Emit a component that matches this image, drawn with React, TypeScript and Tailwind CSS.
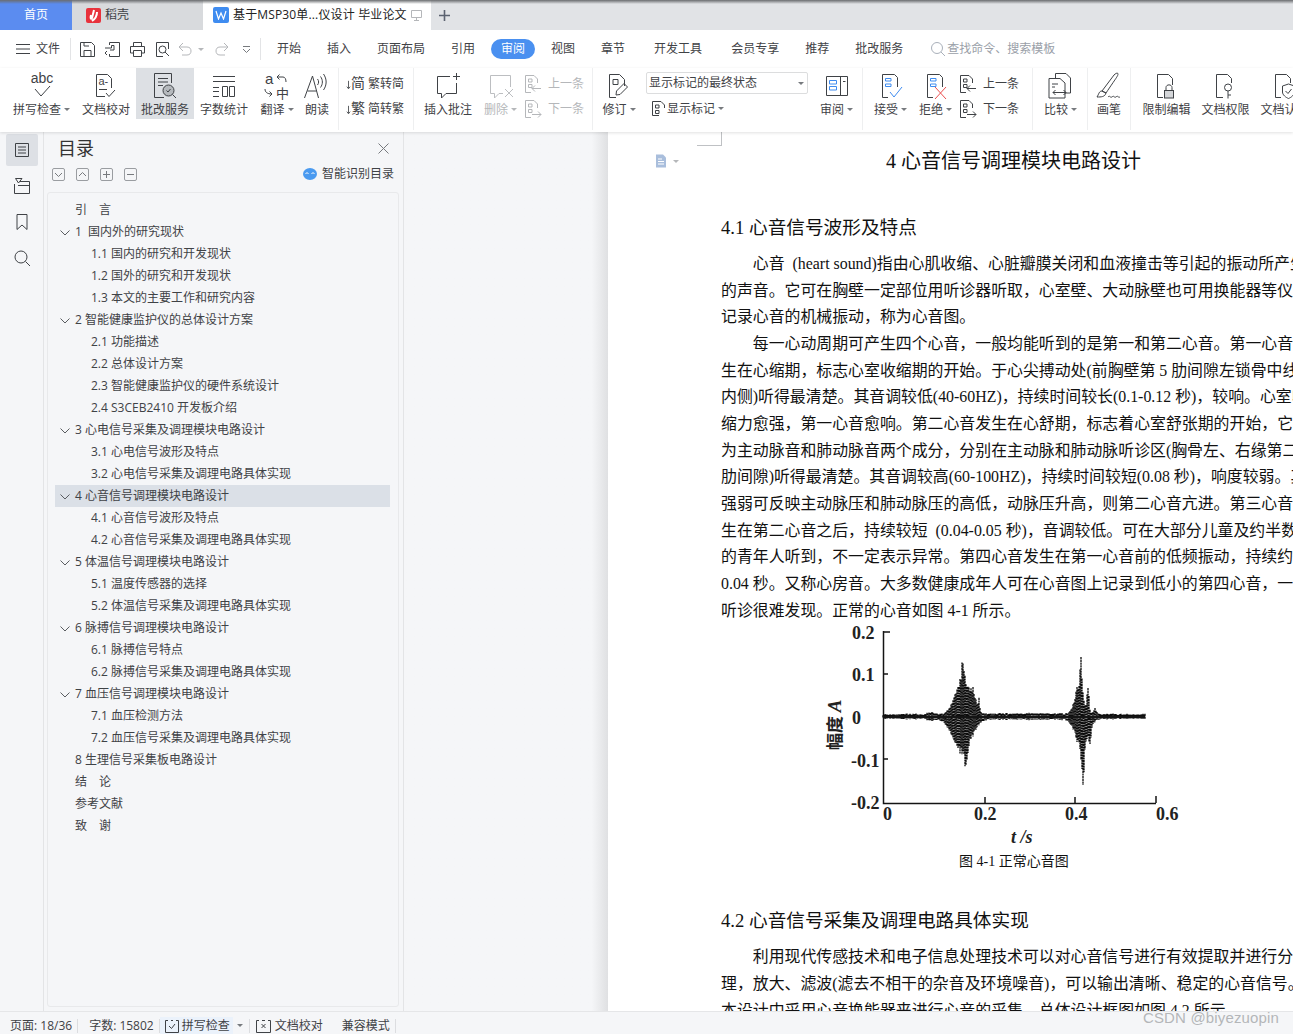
import type { ReactNode } from "react";

const ui = "font-['Open_Sans','Noto_Sans_CJK_SC',sans-serif]";

const Caret = ({ grey = false }: { grey?: boolean }) => (
  <span
    className={`ml-[3px] inline-block h-0 w-0 border-x-[3px] border-t-[3px] border-x-transparent ${
      grey ? "border-t-[#b5b7ba]" : "border-t-[#777a7e]"
    }`}
  />
);

const Ico = ({ s = 24, w, children, c = "#3f4246" }: { s?: number; w?: number; children: ReactNode; c?: string }) => (
  <svg width={w ?? s} height={s} viewBox={`0 0 ${w ?? s} ${s}`} fill="none" stroke={c} strokeWidth="1">
    {children}
  </svg>
);

const icons: Record<string, ReactNode> = {
  spell: (
    <Ico s={28} w={30}>
      <text x="15" y="11" textAnchor="middle" fontSize="14" fill="#3f4246" stroke="none" fontFamily="Liberation Sans">abc</text>
      <path d="M8 17L14 24L23 14" />
    </Ico>
  ),
  proof: (
    <Ico s={28}>
      <path d="M13 24.5H4.5V2.5H15.5L19.5 6.5V16" />
      <text x="6.5" y="13" fontSize="11" fill="#3f4246" stroke="none" fontFamily="Liberation Sans">a-</text>
      <path d="M7 17.5H15M14 21L17 24.5L23 18" />
    </Ico>
  ),
  service: (
    <Ico s={28}>
      <path d="M13 25.5H3.5V1.5H20.5V11" />
      <path d="M7 6.5H17M7 10H17M7 13.5H12" />
      <circle cx="17.5" cy="18.5" r="5.5" fill="#8d9196" fillOpacity="0.5" />
      <path d="M15.5 18.5L17 20L19.5 17M21.5 22.5L25 26" />
    </Ico>
  ),
  count: (
    <Ico s={28} w={26}>
      <path d="M2 4.5H24M2 9.5H24M2 15.5H8M2 19.5H8M2 24.5H8" />
      <path d="M11.5 14.5H16.5V24.5H11.5ZM18.5 14.5H23.5V24.5H18.5Z" />
    </Ico>
  ),
  trans: (
    <Ico s={28} w={30}>
      <text x="3" y="12" fontSize="15" fill="#3f4246" stroke="none" fontFamily="Liberation Sans">a</text>
      <text x="14" y="26" fontSize="13" fill="#3f4246" stroke="none" fontFamily="Noto Sans CJK SC">中</text>
      <path d="M15 5H21C23 5 24 7 24 10M15 5L17.5 2.5M15 5L17.5 7.5M3 17C3 20 5 22 10 22M10 22L7.5 19.5M10 22L7.5 24.5" />
    </Ico>
  ),
  read: (
    <Ico s={28}>
      <path d="M1.5 26L9.5 4L15.5 26M4.5 19H13.5" />
      <path d="M14.5 7C16 9 16 11 14.5 13M17.5 4.5C20 8 20 12 17.5 15.5M20.5 2C24 7 24 13 20.5 18" />
    </Ico>
  ),
  comment: (
    <Ico s={28} w={30}>
      <path d="M17 4.5H4.5V21.5H8.5V26L13 21.5H23.5V11" />
      <path d="M23.5 1V8M20 4.5H27" />
    </Ico>
  ),
  del: (
    <Ico s={28} w={30} c="#bcbec1">
      <path d="M4.5 3.5H24.5V15M4.5 3.5V21.5H8.5V26L13 21.5H17" />
      <path d="M19 17L27 25M27 17L19 25" />
    </Ico>
  ),
  track: (
    <Ico s={28}>
      <path d="M11 25.5H4.5V2.5H14.5L19.5 7.5V14" />
      <path d="M8 7.5H13V12.5H8Z" />
      <path d="M11 23L11.5 19L19 11.5L22.5 15L15 22.5Z" />
    </Ico>
  ),
  panel: (
    <Ico s={24}>
      <path d="M1.5 2.5H22.5V21.5H1.5ZM15.5 2.5V21.5M18 7.5H20.5" />
      <path d="M4.5 6.5H11.5V10H4.5ZM4.5 12.5H11.5V16H4.5Z" stroke="#3f8cf0" />
    </Ico>
  ),
  accept: (
    <Ico s={28}>
      <path d="M11 25.5H5.5V2.5H17.5L20.5 5.5V15" />
      <path d="M8.5 6.5H14V9H8.5ZM8.5 12H14V14.5H8.5Z" stroke="#3f8cf0" />
      <path d="M13 20L17 25L25 15" stroke="#3f8cf0" />
    </Ico>
  ),
  reject: (
    <Ico s={28}>
      <path d="M11 25.5H5.5V2.5H17.5L20.5 5.5V15" />
      <path d="M8.5 6.5H14V9H8.5ZM8.5 12H14V14.5H8.5Z" stroke="#3f8cf0" />
      <path d="M13 15L24 27M24 15L13 27" stroke="#ec4f4f" />
    </Ico>
  ),
  compare: (
    <Ico s={28}>
      <path d="M8.5 6.5V1.5H19L23.5 6V21H18" />
      <path d="M2 6.5H13L18 11V26H2Z" />
      <path d="M5 12H11M5 15H8M6 20.5H19M6 20.5L8.5 18M6 20.5L8.5 23M19 20.5L16.5 18M19 20.5L16.5 23" />
    </Ico>
  ),
  brush: (
    <Ico s={28} w={30}>
      <path d="M8 19L20 3C22 1 24 0.5 24 2C24 4 22 6 12 21Z" />
      <path d="M8 19C5 19 5 22 3 25C7 25 11 25 12 21Z" />
      <path d="M14 25C16 23 16 26 18 25C20 23 20 26 22 25C24 23 24 26 26 25" />
    </Ico>
  ),
  lock: (
    <Ico s={28}>
      <path d="M10 25.5H4.5V2.5H15.5L19.5 6.5V13" />
      <rect x="11.5" y="18.5" width="9" height="7.5" fill="#d4d6d9" />
      <path d="M13 18.5V15.5C13 12 19 12 19 15.5V18.5" />
    </Ico>
  ),
  key: (
    <Ico s={28}>
      <path d="M11 25.5H4.5V2.5H15.5L19.5 6.5V11" />
      <circle cx="16" cy="15.5" r="3.5" />
      <path d="M16 19V26.5M16 23H19" />
    </Ico>
  ),
  shield: (
    <Ico s={28}>
      <path d="M10 25.5H4.5V2.5H15.5L19.5 6.5V11" />
      <path d="M11.5 14L17.5 12L23.5 14V20C23.5 23 20 25.5 17.5 26.5C15 25.5 11.5 23 11.5 20Z" />
      <path d="M14.5 19L17 21.5L20.5 17" />
    </Ico>
  ),
};

const smallDoc = (arrow: "l" | "r", c = "#3f4246") => (
  <Ico s={20} w={22} c={c}>
    <path d="M8 18.5H2.5V1.5H11L14.5 5V9" />
    <path d="M5.5 5H9V8H5.5ZM5.5 10.5H9V13.5H5.5Z" />
    {arrow === "l" ? <path d="M9 14.5H18M9 14.5L12 11.5M9 14.5L12 17.5" /> : <path d="M9 15.5H18M18 15.5L15 12.5M18 15.5L15 18.5" />}
  </Ico>
);

const convert = (glyph: string) => (
  <span className="flex h-[20px] w-[19px] items-center justify-end text-[14px]">
    <svg width="6" height="12" viewBox="0 0 6 12" fill="none" stroke="#3f4246" className="mt-[3px]">
      <path d="M3 1V10M1 8L3 10.5L5 8" />
    </svg>
    {glyph}
  </span>
);

const RibbonBtn = ({
  className,
  icon,
  label,
  caret,
  grey,
  active,
}: {
  className: string;
  icon: string;
  label: string;
  caret?: boolean;
  grey?: boolean;
  active?: boolean;
}) => (
  <div className={`${className} flex shrink-0 flex-col items-center`}>
    <div className={`flex h-[51px] w-full flex-col items-center pt-[3px] ${active ? "bg-[#dde0e4]" : ""}`}>
      <div className="flex h-[29px] items-center justify-center">{icons[icon]}</div>
      <div className={`flex h-[19px] items-center whitespace-nowrap text-xs ${grey ? "text-[#b5b7ba]" : "text-[#3f4246]"}`}>
        {label}
        {caret && <Caret grey={grey} />}
      </div>
    </div>
  </div>
);

const Sep = ({ className = "" }: { className?: string }) => <div className={`${className} h-[62px] w-px shrink-0 bg-[#eeeff0]`} />;

const SmallRow = ({ icon, label, grey }: { icon: ReactNode; label: string; grey?: boolean }) => (
  <div className={`flex h-[25px] items-center whitespace-nowrap text-xs ${grey ? "text-[#b5b7ba]" : "text-[#3f4246]"}`}>
    {icon}
    <span className="ml-[3px]">{label}</span>
  </div>
);

const tabs: [string, string][] = [
  ["开始", "ml-[16px]"],
  ["插入", "ml-[26px]"],
  ["页面布局", "ml-[26px]"],
  ["引用", "ml-[26px]"],
];

const toc: { t: string; l: 0 | 1 | 2; active?: boolean }[] = [
  { t: "引　言", l: 0 },
  { t: "1  国内外的研究现状", l: 1 },
  { t: "1.1 国内的研究和开发现状", l: 2 },
  { t: "1.2 国外的研究和开发现状", l: 2 },
  { t: "1.3 本文的主要工作和研究内容", l: 2 },
  { t: "2 智能健康监护仪的总体设计方案", l: 1 },
  { t: "2.1 功能描述", l: 2 },
  { t: "2.2 总体设计方案", l: 2 },
  { t: "2.3 智能健康监护仪的硬件系统设计", l: 2 },
  { t: "2.4 S3CEB2410 开发板介绍", l: 2 },
  { t: "3 心电信号采集及调理模块电路设计", l: 1 },
  { t: "3.1 心电信号波形及特点", l: 2 },
  { t: "3.2 心电信号采集及调理电路具体实现", l: 2 },
  { t: "4 心音信号调理模块电路设计", l: 1, active: true },
  { t: "4.1 心音信号波形及特点", l: 2 },
  { t: "4.2 心音信号采集及调理电路具体实现", l: 2 },
  { t: "5 体温信号调理模块电路设计", l: 1 },
  { t: "5.1 温度传感器的选择", l: 2 },
  { t: "5.2 体温信号采集及调理电路具体实现", l: 2 },
  { t: "6 脉搏信号调理模块电路设计", l: 1 },
  { t: "6.1 脉搏信号特点", l: 2 },
  { t: "6.2 脉搏信号采集及调理电路具体实现", l: 2 },
  { t: "7 血压信号调理模块电路设计", l: 1 },
  { t: "7.1 血压检测方法", l: 2 },
  { t: "7.2 血压信号采集及调理电路具体实现", l: 2 },
  { t: "8 生理信号采集板电路设计", l: 0 },
  { t: "结　论", l: 0 },
  { t: "参考文献", l: 0 },
  { t: "致　谢", l: 0 },
];

const para1 = [
  "　　心音  (heart sound)指由心肌收缩、心脏瓣膜关闭和血液撞击等引起的振动所产生",
  "的声音。它可在胸壁一定部位用听诊器听取，心室壁、大动脉壁也可用换能器等仪器",
  "记录心音的机械振动，称为心音图。",
  "　　每一心动周期可产生四个心音，一般均能听到的是第一和第二心音。第一心音发",
  "生在心缩期，标志心室收缩期的开始。于心尖搏动处(前胸壁第 5 肋间隙左锁骨中线",
  "内侧)听得最清楚。其音调较低(40-60HZ)，持续时间较长(0.1-0.12 秒)，较响。心室收",
  "缩力愈强，第一心音愈响。第二心音发生在心舒期，标志着心室舒张期的开始，它分",
  "为主动脉音和肺动脉音两个成分，分别在主动脉和肺动脉听诊区(胸骨左、右缘第二",
  "肋间隙)听得最清楚。其音调较高(60-100HZ)，持续时间较短(0.08 秒)，响度较弱。其",
  "强弱可反映主动脉压和肺动脉压的高低，动脉压升高，则第二心音亢进。第三心音发",
  "生在第二心音之后，持续较短  (0.04-0.05 秒)，音调较低。可在大部分儿童及约半数",
  "的青年人听到，不一定表示异常。第四心音发生在第一心音前的低频振动，持续约",
  "0.04 秒。又称心房音。大多数健康成年人可在心音图上记录到低小的第四心音，一般",
  "听诊很难发现。正常的心音如图 4-1 所示。",
];

const para2 = [
  "　　利用现代传感技术和电子信息处理技术可以对心音信号进行有效提取并进行分析处",
  "理，放大、滤波(滤去不相干的杂音及环境噪音)，可以输出清晰、稳定的心音信号。",
  "本设计中采用心音换能器来进行心音的采集，总体设计框图如图 4.2 所示。",
];

// fake heart sound trace, seeded so the picture stays the same
const wave = (() => {
  let d = "";
  let seed = 11;
  const rnd = () => {
    seed = (seed * 16807) % 2147483647;
    return seed / 2147483647;
  };
  const g = (x: number, c: number, w: number, a: number) => a * Math.exp(-((x - c) * (x - c)) / (2 * w * w));
  for (let x = 883; x <= 1145; x += 1) {
    const bump = 1.5 + rnd() * 1.5 + g(x, 931, 3, 2) + g(x, 1035, 40, 1);
    const up =
      bump + g(x, 963, 1.2, 24) + g(x, 962, 7, 36) + g(x, 973, 3, 16) + g(x, 979, 0.8, 12) + g(x, 1081, 1, 30) + g(x, 1079, 4, 30) + g(x, 1088, 1, 30) + g(x, 1095, 1.5, 6);
    const dn =
      bump + g(x, 966, 1.5, 18) + g(x, 962, 9, 36) + g(x, 1083, 1.2, 36) + g(x, 1082, 6, 32) + g(x, 1090, 1, 14);
    const k = 0.8 + rnd() * 0.2;
    d += `M${x} ${(715.5 - up * k).toFixed(1)}V${(715.5 + dn * k).toFixed(1)}`;
  }
  return d;
})();

const Figure = () => (
  <svg width="370" height="227" viewBox="820 623 370 227" className="ml-[99px] block" fill="none" stroke="#141414">
    <path d="M883.5 630V802.5H1156" strokeWidth="1.5" />
    <path d="M883 631H890M883 673H888M883 716H888M883 758H888M985 802V796M1075 802V796M1156 802V795" strokeWidth="1.5" />
    <path d={wave} strokeWidth="1.3" strokeDasharray="2.2 0.5" stroke="#0c0c0c" />
    <path d="M883 716H1145" strokeWidth="2" />
    <g fill="#222" stroke="none" fontFamily="Liberation Serif" fontSize="18" fontWeight="700">
      <text x="852" y="638">0.2</text>
      <text x="852" y="680">0.1</text>
      <text x="852" y="723">0</text>
      <text x="851" y="766">-0.1</text>
      <text x="851" y="808">-0.2</text>
      <text x="883" y="819">0</text>
      <text x="974" y="819">0.2</text>
      <text x="1065" y="819">0.4</text>
      <text x="1156" y="819">0.6</text>
      <text x="1011" y="842" fontSize="18" fontStyle="italic">t /s</text>
      <text transform="translate(841 749) rotate(-90)" fontSize="17" fontFamily="Noto Sans CJK SC">
        幅度 <tspan fontStyle="italic" fontSize="19" fontFamily="Liberation Serif">A</tspan>
      </text>
    </g>
  </svg>
);

const SquareBtn = ({ d }: { d: string }) => (
  <div className="flex h-[13px] w-[13px] items-center justify-center rounded-[2px] border border-[#9a9da1]">
    <svg width="9" height="9" viewBox="0 0 9 9" fill="none" stroke="#777a7e" strokeWidth="1">
      <path d={d} />
    </svg>
  </div>
);

const App = () => {
  return (
    <div className={`${ui} relative flex h-[1034px] w-[1293px] flex-col overflow-hidden bg-white text-xs text-[#3f4246]`}>
      {/* title bar */}
      <div className="flex h-[30px] shrink-0 items-stretch bg-[#e1e3e6]">
        <div className="flex w-[72px] items-center justify-center bg-[#5b8cf0] text-white">首页</div>
        <div className="flex w-[131px] items-center bg-[#d8dadd] pl-[14px]">
          <div className="flex h-[15px] w-[15px] items-center justify-center rounded-[2px] bg-[#e8323c]">
            <svg width="11" height="13" viewBox="0 0 11 13" fill="none" stroke="#fff" strokeWidth="2">
              <path d="M6 1L4 9C3 11 2 9 3 6M9 3C9 7 7 10 4 12" />
            </svg>
          </div>
          <span className="ml-[4px]">稻壳</span>
        </div>
        <div className="flex w-[228px] items-center bg-white pl-[10px]">
          <div className="flex h-[16px] w-[16px] items-center justify-center rounded-[2px] bg-[#3f8cf0]">
            <svg width="12" height="10" viewBox="0 0 12 10" fill="none" stroke="#fff" strokeWidth="1.2">
              <path d="M1 1L3.5 9L6 3L8.5 9L11 1" />
            </svg>
          </div>
          <span className="ml-[4px] whitespace-nowrap tracking-[0.15px] text-[#222]">基于MSP30单...仪设计 毕业论文</span>
          <svg width="13" height="13" viewBox="0 0 13 13" fill="none" stroke="#b5b7ba" className="ml-[3px]">
            <path d="M1.5 1.5H11.5V8.5H1.5ZM6.5 8.5V11.5M4 11.5H9" />
          </svg>
        </div>
        <div className="flex items-center pl-[7px]">
          <svg width="13" height="13" viewBox="0 0 13 13" stroke="#5b6270" strokeWidth="1.6">
            <path d="M6.5 1V12M1 6.5H12" />
          </svg>
        </div>
      </div>

      {/* menu row */}
      <div className="flex h-[38px] shrink-0 items-center bg-white">
        <svg width="14" height="12" viewBox="0 0 14 12" stroke="#3f4246" className="ml-[16px]">
          <path d="M0 1.5H14M0 6H14M0 10.5H14" />
        </svg>
        <span className="ml-[6px]">文件</span>
        <div className="ml-[10px] h-[22px] w-px bg-[#e3e4e6]" />
        <div className="ml-[8px] flex items-center gap-[8px]">
          <Ico s={17}>
            <path d="M1.5 1.5H12.5L15.5 4.5V15.5H1.5ZM5 15.5V9.5H12V15.5M5 1.5V5H10" />
          </Ico>
          <Ico s={17}>
            <path d="M5.5 4V1.5H15.5V15.5H5.5V13M1 7H7.5V4.5H10V9H6M3 10L1 12L3 14" />
          </Ico>
          <Ico s={17}>
            <path d="M4.5 5V1.5H12.5V5M4.5 12H1.5V5.5H15.5V12H12.5M4.5 9.5H12.5V15.5H4.5Z" />
          </Ico>
          <Ico s={17}>
            <path d="M9 15.5H2.5V1.5H14.5V8" />
            <circle cx="8.5" cy="8.5" r="3.5" />
            <path d="M11 11L15 15" />
          </Ico>
        </div>
        <svg width="14" height="14" viewBox="0 0 14 14" fill="none" stroke="#b5b7ba" className="ml-[7px]">
          <path d="M5 1L1 5L5 9M1 5H9C12 5 13 7 13 9C13 11 12 13 9 13H4" />
        </svg>
        <span className="ml-[3px] flex"><Caret grey /></span>
        <svg width="14" height="14" viewBox="0 0 14 14" fill="none" stroke="#b5b7ba" className="ml-[11px]">
          <path d="M9 1L13 5L9 9M13 5H5C2 5 1 7 1 9C1 11 2 13 5 13H10" />
        </svg>
        <svg width="9" height="9" viewBox="0 0 9 9" fill="none" stroke="#777a7e" className="ml-[13px]">
          <path d="M1 1.5H8M1 4L4.5 7.5L8 4" />
        </svg>
        <div className="ml-[9px] h-[22px] w-px bg-[#e3e4e6]" />
        {tabs.map(([t, c]) => (
          <span key={t} className={`${c} whitespace-nowrap`}>{t}</span>
        ))}
        <span className="ml-[16px] flex h-[20px] w-[44px] items-center justify-center rounded-full bg-[#4a90f0] text-white">审阅</span>
        <span className="ml-[16px]">视图</span>
        <span className="ml-[26px]">章节</span>
        <span className="ml-[29px]">开发工具</span>
        <span className="ml-[29px]">会员专享</span>
        <span className="ml-[26px]">推荐</span>
        <span className="ml-[26px]">批改服务</span>
        <svg width="16" height="16" viewBox="0 0 16 16" fill="none" stroke="#a9b0ba" className="ml-[27px]">
          <circle cx="7" cy="7" r="5.5" />
          <path d="M11 11L15 15" />
        </svg>
        <span className="ml-px whitespace-nowrap text-[#9aa0a8]">查找命令、搜索模板</span>
      </div>

      {/* ribbon */}
      <div className="z-10 flex h-[64px] shrink-0 items-start overflow-hidden bg-white pl-[7px] shadow-[0_1px_3px_rgba(0,0,0,0.12)]">
        <RibbonBtn className="w-[69px]" icon="spell" label="拼写检查" caret />
        <RibbonBtn className="w-[60px]" icon="proof" label="文档校对" />
        <RibbonBtn className="w-[58px]" icon="service" label="批改服务" active />
        <RibbonBtn className="w-[60px]" icon="count" label="字数统计" />
        <RibbonBtn className="w-[46px]" icon="trans" label="翻译" caret />
        <RibbonBtn className="w-[34px]" icon="read" label="朗读" />
        <Sep className="ml-[4px]" />
        <div className="w-[74px] shrink-0 pl-[7px] pt-[3px]">
          <SmallRow label="繁转简" icon={convert("简")} />
          <SmallRow label="简转繁" icon={convert("繁")} />
        </div>
        <Sep />
        <RibbonBtn className="ml-[4px] w-[60px]" icon="comment" label="插入批注" />
        <RibbonBtn className="w-[45px]" icon="del" label="删除" caret grey />
        <div className="w-[69px] shrink-0 pt-[3px]">
          <SmallRow grey label="上一条" icon={smallDoc("l", "#b5b7ba")} />
          <SmallRow grey label="下一条" icon={smallDoc("r", "#b5b7ba")} />
        </div>
        <Sep />
        <RibbonBtn className="ml-[4px] w-[44px]" icon="track" label="修订" caret />
        <div className="ml-[5px] w-[162px] shrink-0 pt-[4px]">
          <div className="flex h-[22px] items-center justify-between whitespace-nowrap rounded-[2px] border border-[#dcddde] pl-[2px] pr-[3px]">
            显示标记的最终状态
            <Caret />
          </div>
          <div className="flex h-[27px] items-center whitespace-nowrap pl-[5px] pt-[2px]">
            <Ico s={17} w={16}>
              <path d="M8 15.5H1.5V1.5H10L13.5 5V8" />
              <path d="M4.5 5H8V8H4.5ZM4.5 10.5H8V13.5H4.5Z" />
            </Ico>
            <span>显示标记</span>
            <Caret />
          </div>
        </div>
        <RibbonBtn className="ml-[4px] w-[49px]" icon="panel" label="审阅" caret />
        <Sep className="ml-px" />
        <RibbonBtn className="ml-[5px] w-[45px]" icon="accept" label="接受" caret />
        <RibbonBtn className="w-[45px]" icon="reject" label="拒绝" caret />
        <div className="w-[74px] shrink-0 pt-[3px]">
          <SmallRow label="上一条" icon={smallDoc("l")} />
          <SmallRow label="下一条" icon={smallDoc("r")} />
        </div>
        <Sep />
        <RibbonBtn className="ml-[3px] w-[49px]" icon="compare" label="比较" caret />
        <Sep className="ml-[2px]" />
        <RibbonBtn className="w-[42px]" icon="brush" label="画笔" />
        <Sep />
        <RibbonBtn className="ml-[6px] w-[59px]" icon="lock" label="限制编辑" />
        <RibbonBtn className="w-[59px]" icon="key" label="文档权限" />
        <RibbonBtn className="w-[59px]" icon="shield" label="文档认证" />
      </div>

      {/* main area */}
      <div className="flex min-h-0 flex-1">
        <div className="flex w-[44px] shrink-0 flex-col items-center gap-[4px] border-r border-[#e3e4e6] bg-[#f5f6f8] pt-[2px]">
          <div className="flex h-[32px] w-[32px] items-center justify-center rounded-[2px] bg-[#dde0e5]">
            <Ico s={16}>
              <path d="M1.5 1.5H14.5V14.5H1.5ZM4 5H12M4 8H12M4 11H12" />
            </Ico>
          </div>
          <div className="flex h-[32px] items-center">
            <Ico s={18}>
              <path d="M2.5 1.5H9L5.5 6ZM7 4.5H16.5V16.5H1.5V7M5 8.5H16.5" />
            </Ico>
          </div>
          <div className="flex h-[32px] items-center">
            <Ico s={18}>
              <path d="M4 1.5H14V16.5L9 12L4 16.5Z" />
            </Ico>
          </div>
          <div className="flex h-[32px] items-center">
            <Ico s={18}>
              <circle cx="8" cy="8" r="6" />
              <path d="M12.5 12.5L17 17" />
            </Ico>
          </div>
        </div>

        <div className="flex w-[360px] shrink-0 flex-col border-r border-[#e3e4e6] bg-[#f5f6f8]">
          <div className="flex h-[30px] items-center justify-between pl-[14px] pr-[14px] pt-[2px]">
            <span className="text-lg text-[#333]">目录</span>
            <svg width="11" height="11" viewBox="0 0 11 11" stroke="#777a7e">
              <path d="M0.5 0.5L10.5 10.5M10.5 0.5L0.5 10.5" />
            </svg>
          </div>
          <div className="flex h-[24px] items-center justify-between pl-[8px] pr-[9px]">
            <div className="flex gap-[11px]">
              <SquareBtn d="M1 3L4.5 6.5L8 3" />
              <SquareBtn d="M1 6L4.5 2.5L8 6" />
              <SquareBtn d="M1 4.5H8M4.5 1V8" />
              <SquareBtn d="M1 4.5H8" />
            </div>
            <div className="flex items-center gap-[5px]">
              <svg width="14" height="12" viewBox="0 0 14 12">
                <ellipse cx="7" cy="6" rx="7" ry="6" fill="#4a9af0" />
                <path d="M2.5 6L4 4.5L5.5 6M8.5 6L10 4.5L11.5 6" stroke="#fff" fill="none" />
              </svg>
              <span className="whitespace-nowrap">智能识别目录</span>
            </div>
          </div>
          <div className="mb-[4px] ml-[3px] mr-[4px] mt-[6px] flex-1 rounded-[3px] border border-[#e8e9eb] pl-[7px] pr-[8px] pt-[6px]">
            {toc.map((r) => (
              <div
                key={r.t}
                className={`relative flex h-[22px] items-center whitespace-pre ${r.active ? "bg-[#dbe0e7]" : ""} ${
                  r.l === 2 ? "pl-[36px]" : "pl-[20px]"
                }`}
              >
                {r.l === 1 && (
                  <svg width="10" height="6" viewBox="0 0 10 6" fill="none" stroke="#5a5d61" className="absolute left-[5px] top-[9px]">
                    <path d="M0.5 0.5L5 5L9.5 0.5" />
                  </svg>
                )}
                {r.t}
              </div>
            ))}
          </div>
        </div>

        <div className="w-[204px] shrink-0 bg-gradient-to-r from-[#f5f6f8] from-[92%] to-[#dfe0e2]" />

        <div className="min-w-0 flex-1 overflow-hidden bg-white font-['Liberation_Serif','Noto_Sans_CJK_SC',serif] text-[#111]">
          <div className="flex h-[15px] items-start">
            <div className="ml-[89px] h-[14px] w-[25px] border-b border-r border-[#bfc1c4]" />
          </div>
          <div className="flex h-[28px] items-center">
            <div className="ml-[47px] flex items-center font-['Open_Sans','Noto_Sans_CJK_SC',sans-serif]">
              <Ico s={14} w={12} c="#fff">
                <path d="M1 0.5H8L11 3.5V13.5H1Z" fill="#a9bedc" stroke="none" />
                <path d="M3 5H7M3 7.5H9M3 10H9" />
              </Ico>
              <span className="ml-[3px] flex"><Caret grey /></span>
            </div>
            <div className="ml-[207px] whitespace-pre text-xl">4 心音信号调理模块电路设计</div>
          </div>
          <div className="ml-[113px] w-[760px]">
            <div className="mt-[39px] flex h-[28px] items-center whitespace-pre text-[18.67px]">4.1 心音信号波形及特点</div>
            <div className="mt-[9px]">
              {para1.map((l) => (
                <div key={l} className="h-[26.67px] whitespace-pre text-[15.9px] leading-[26.67px]">{l}</div>
              ))}
            </div>
            <Figure />
            <div className="ml-[238px] flex h-[22px] items-center whitespace-pre text-sm">图 4-1 正常心音图</div>
            <div className="mt-[34px] flex h-[28px] items-center whitespace-pre text-[18.67px]">4.2 心音信号采集及调理电路具体实现</div>
            <div className="mt-[9px]">
              {para2.map((l) => (
                <div key={l} className="h-[26.67px] whitespace-pre text-[15.9px] leading-[26.67px]">{l}</div>
              ))}
            </div>
          </div>
        </div>
      </div>

      {/* status bar */}
      <div className="z-10 flex h-[23px] shrink-0 items-end border-t border-[#e5e6e8] bg-[#f5f6f8]">
        <div className="flex h-[18px] items-center pt-px">
          <span className="ml-[10px] whitespace-nowrap">页面: 18/36</span>
          <div className="ml-[5px] h-[14px] w-px bg-[#dcdde0]" />
          <span className="ml-[11px] whitespace-nowrap">字数: 15802</span>
          <div className="ml-[5px] h-[14px] w-px bg-[#dcdde0]" />
          <div className="flex h-[18px] w-[73px] items-center bg-[#ebf2fb] pl-[5px]">
            <Ico s={14}>
              <path d="M3 1.5H0.5V13.5H13.5V1.5H11M6 1.5H8M4 7L6.5 9.5L10 5" />
            </Ico>
            <span className="ml-[3px] whitespace-nowrap">拼写检查</span>
          </div>
          <span className="ml-[1px] flex"><Caret /></span>
          <div className="ml-[6px] h-[14px] w-px bg-[#dcdde0]" />
          <span className="ml-[6px] flex">
            <Ico s={14} w={15}>
              <path d="M3 1.5H0.5V13.5H14.5V1.5H12M6 1.5H9M5.5 5L9.5 9M9.5 5L5.5 9" />
            </Ico>
          </span>
          <span className="ml-[4px] whitespace-nowrap">文档校对</span>
          <span className="ml-[19px] whitespace-nowrap">兼容模式</span>
          <div className="ml-[5px] h-[14px] w-px bg-[#dcdde0]" />
        </div>
      </div>

      <div className="pointer-events-none absolute left-0 top-0 h-[4px] w-full bg-gradient-to-b from-[#6b6d70] to-transparent" />
      <div className="pointer-events-none absolute right-[14px] top-[1008px] z-20 whitespace-nowrap font-['Liberation_Sans',sans-serif] text-[15px] tracking-[0.15px] text-[#b4b6b9]">
        CSDN @biyezuopin
      </div>
    </div>
  );
};

export default App;
